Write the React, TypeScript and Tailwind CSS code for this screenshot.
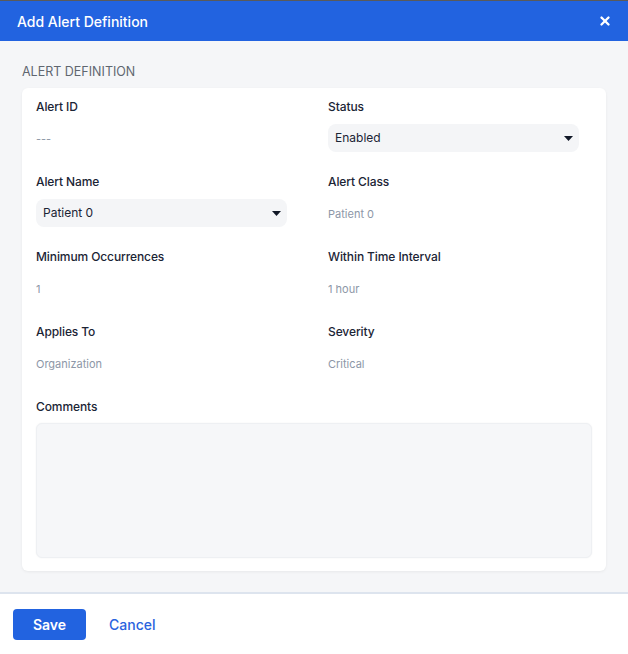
import { X } from "lucide-react";

type Field = {
  label: string;
  value: string;
  select?: boolean;
};

const rows: [Field, Field][] = [
  [
    { label: "Alert ID", value: "---" },
    { label: "Status", value: "Enabled", select: true },
  ],
  [
    { label: "Alert Name", value: "Patient 0", select: true },
    { label: "Alert Class", value: "Patient 0" },
  ],
  [
    { label: "Minimum Occurrences", value: "1" },
    { label: "Within Time Interval", value: "1 hour" },
  ],
  [
    { label: "Applies To", value: "Organization" },
    { label: "Severity", value: "Critical" },
  ],
];

function Caret() {
  return (
    <svg width="9" height="5" viewBox="0 0 9 5" className="shrink-0">
      <path d="M0 0h9L4.5 5z" fill="#111827" />
    </svg>
  );
}

function FieldCell({ field }: { field: Field }) {
  return (
    <div className="h-[75px] flex flex-col">
      <div className="text-[12px] leading-[16px] font-medium text-[#1b2435] tracking-[-0.1px]">{field.label}</div>
      {field.select ? (
        <div className="mt-[9px] w-[251px] h-[28px] rounded-[8px] bg-[#f4f5f7] pl-[7px] pr-[6px] flex items-center justify-between">
          <span className="text-[12px] text-[#1b2435]">{field.value}</span>
          <Caret />
        </div>
      ) : (
        <div className="mt-[10px] h-[28px] flex items-center">
          <span className="text-[11px] text-[#8d97a7]">{field.value}</span>
        </div>
      )}
    </div>
  );
}

export default function App() {
  return (
    <div
      className="w-[628px] h-[654px] flex flex-col border-t border-[#5a5a5a] bg-white"
      style={{ fontFamily: "Inter, 'Noto Sans', sans-serif" }}
    >
      {/* Header */}
      <div className="h-[40px] bg-[#2263e0] flex items-center justify-between pl-[17px] pr-[16px]">
        <h1 className="text-white text-[14px] font-medium">Add Alert Definition</h1>
        <X className="w-[14px] h-[14px] text-white" strokeWidth={4} />
      </div>

      {/* Body */}
      <div className="flex-1 bg-[#f5f6f8] px-[22px] pt-[23px] pb-[20px] border-b-2 border-[#dde4ee]">
        <div className="text-[12.5px] leading-[16px] uppercase text-[#5f6670] mb-[8px]">
          Alert Definition
        </div>
        <div className="bg-white rounded-[6px] shadow-[0_1px_3px_rgba(0,0,0,0.06)] px-[14px] pt-[11px] pb-[13px]">
          {rows.map((row, i) => (
            <div key={i} className="grid grid-cols-2 gap-x-[28px]">
              <FieldCell field={row[0]} />
              <FieldCell field={row[1]} />
            </div>
          ))}
          <div className="text-[12px] leading-[16px] font-medium text-[#1b2435] tracking-[-0.1px]">Comments</div>
          <textarea className="mt-[8px] block w-full h-[135px] resize-none rounded-[6px] bg-[#f6f7f9] border border-[#eef0f3] shadow-[0_0_2px_rgba(0,0,0,0.05)] outline-none" />
        </div>
      </div>

      {/* Footer */}
      <div className="h-[60px] flex items-start pt-[15px] pl-[13px] gap-[23px]">
        <button className="w-[73px] h-[31px] rounded-[4px] bg-[#2263e0] text-white text-[14px] font-semibold">
          Save
        </button>
        <button className="h-[31px] text-[14px] font-medium text-[#2a63de]">Cancel</button>
      </div>
    </div>
  );
}
